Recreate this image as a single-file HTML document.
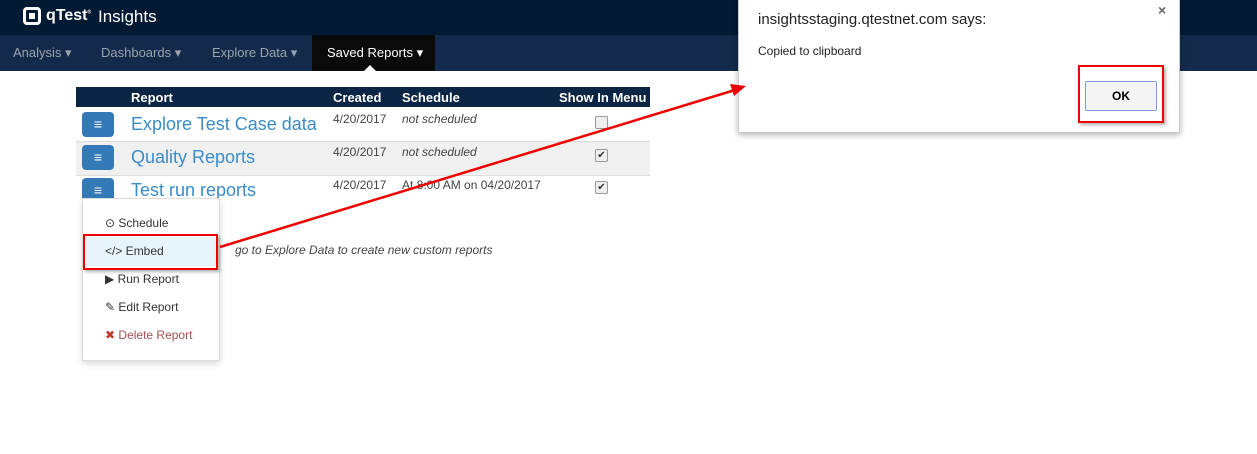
<!DOCTYPE html>
<html><head><style>
body{margin:0;width:1257px;height:454px;position:relative;background:#fff;font-family:"Liberation Sans",sans-serif;overflow:hidden}
.top{position:absolute;left:0;top:0;width:1257px;height:35px;background:#021a33}
.nav{position:absolute;left:0;top:35px;width:1257px;height:36px;background:#132a4a}
.nav span{position:absolute;top:10px;font-size:13px;color:#9aa3ad}
.abs{position:absolute}
.th{position:absolute;top:87px;left:76px;width:574px;height:20px;background:#0b2545}
.th span{position:absolute;top:3px;color:#fff;font-weight:bold;font-size:13px}
.btn{position:absolute;left:82px;width:32px;height:25px;background:#337ab7;border-radius:4px;color:#fff;text-align:center;font-size:14px;line-height:25px}
.title{position:absolute;left:131px;font-size:18px;color:#3a8cc8}
.d{position:absolute;left:333px;font-size:12px;color:#444}
.s{position:absolute;left:402px;font-size:12px;color:#444;font-style:italic}
.cb{position:absolute;left:595px;width:11px;height:11px;border:1px solid #999;border-radius:2px;background:#eee;font-size:10px;line-height:11px;text-align:center;color:#333}
.mi{position:absolute;left:105px;font-size:12px;color:#333}
</style></head><body>
<div class="top"></div>
<div class="abs" style="left:23px;top:7px;width:18px;height:18px;border:3px solid #fff;border-radius:4px;box-sizing:border-box"><div style="margin:3px;width:6px;height:6px;background:#fff"></div></div>
<div class="abs" style="left:46px;top:7px;color:#fff;font-weight:bold;font-size:16px">qTest<sup style="font-size:5px">®</sup></div>
<div class="abs" style="left:98px;top:7px;color:#fff;font-size:17px">Insights</div>
<div class="nav">
<span style="left:13px">Analysis ▾</span>
<span style="left:101px">Dashboards ▾</span>
<span style="left:212px">Explore Data ▾</span>
<div class="abs" style="left:312px;top:0;width:123px;height:36px;background:#0a0a0a"></div>
<span style="left:327px;color:#fff">Saved Reports ▾</span>
</div>
<div class="abs" style="left:364px;top:65px;width:0;height:0;border:6px solid transparent;border-bottom-color:#fff;border-top:0"></div>
<div class="th"><span style="left:55px">Report</span><span style="left:257px">Created</span><span style="left:326px">Schedule</span><span style="left:483px">Show In Menu</span></div>
<div class="abs" style="left:76px;top:141px;width:574px;height:33px;background:#f0f0f0;border-top:1px solid #ddd;border-bottom:1px solid #ddd"></div>
<div class="btn" style="top:112px">≡</div><div class="title" style="top:114px">Explore Test Case data</div><div class="d" style="top:112px">4/20/2017</div><div class="s" style="top:112px">not scheduled</div><div class="cb" style="top:116px"></div>
<div class="btn" style="top:145px">≡</div><div class="title" style="top:147px">Quality Reports</div><div class="d" style="top:145px">4/20/2017</div><div class="s" style="top:145px">not scheduled</div><div class="cb" style="top:149px">✔</div>
<div class="btn" style="top:178px">≡</div><div class="title" style="top:180px">Test run reports</div><div class="d" style="top:178px">4/20/2017</div><div class="s" style="top:178px;font-style:normal">At 8:00 AM on 04/20/2017</div><div class="cb" style="top:181px">✔</div>
<div class="abs" style="left:82px;top:198px;width:136px;height:161px;background:#fff;border:1px solid #ddd;box-shadow:0 3px 6px rgba(0,0,0,.15)"></div>
<div class="abs" style="left:84px;top:236px;width:134px;height:30px;background:#e8f4fc"></div>
<div class="mi" style="top:216px">⊙ Schedule</div>
<div class="mi" style="top:244px">&lt;/&gt; Embed</div>
<div class="mi" style="top:272px">▶ Run Report</div>
<div class="mi" style="top:300px">✎ Edit Report</div>
<div class="mi" style="top:328px;color:#a05050"><span style="color:#c0392b">✖</span> Delete Report</div>
<div class="abs" style="left:83px;top:234px;width:131px;height:32px;border:2px solid #e00;box-shadow:2px 2px 3px rgba(0,0,0,.3)"></div>
<div class="abs" style="left:235px;top:243px;font-size:12px;font-style:italic;color:#444">go to Explore Data to create new custom reports</div>
<div class="abs" style="left:738px;top:-1px;width:440px;height:132px;background:#fff;border:1px solid #ccc;box-shadow:0 2px 6px rgba(0,0,0,.3)"></div>
<div class="abs" style="left:758px;top:11px;font-size:15px;color:#222">insightsstaging.qtestnet.com says:</div>
<div class="abs" style="left:758px;top:44px;font-size:12px;color:#222">Copied to clipboard</div>
<div class="abs" style="left:1158px;top:2px;font-size:14px;color:#666;font-weight:bold">×</div>
<div class="abs" style="left:1085px;top:81px;width:70px;height:28px;border:1px solid #7a9cd3;border-radius:2px;background:#f4f4f4;font-size:12px;font-weight:bold;text-align:center;line-height:28px">OK</div>
<div class="abs" style="left:1078px;top:65px;width:82px;height:54px;border:2px solid #e00;box-shadow:2px 2px 3px rgba(0,0,0,.3)"></div>
<svg class="abs" style="left:0;top:0" width="1257" height="454"><line x1="220" y1="247" x2="735" y2="90" stroke="#e00" stroke-width="2.5"/><polygon points="746,86 730,84 734,96" fill="#e00"/></svg>
</body></html>
